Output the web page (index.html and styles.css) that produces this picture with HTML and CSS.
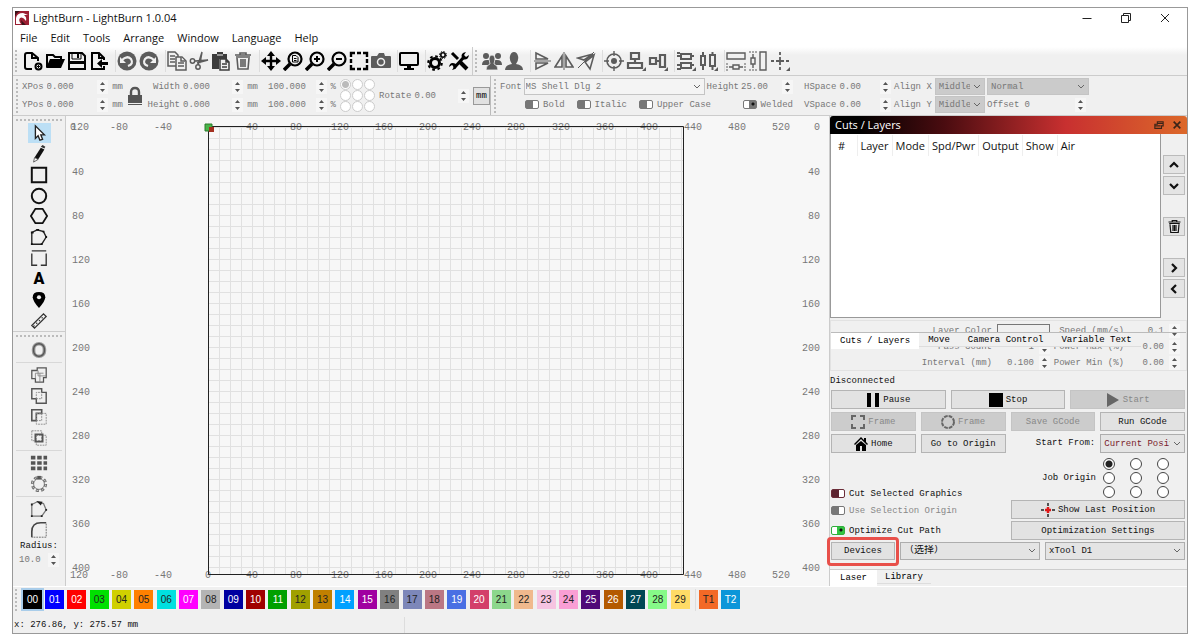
FILE: index.html
```html
<!DOCTYPE html>
<html lang="en">
<head>
<meta charset="utf-8">
<title>LightBurn - LightBurn 1.0.04</title>
<link rel="stylesheet" href="styles.css">
</head>
<body>
<svg class="defs" aria-hidden="true">
  <symbol id="new" viewBox="0 0 20 20"><path d="M9 18H4Q2 18 2 16V4Q2 2 4 2H9L15 7V10M9 2V7H15" fill="none" stroke="currentColor" stroke-width="2"/><circle cx="15.500" cy="15.500" r="3" fill="none" stroke="currentColor" stroke-width="2"/><path d="M15.500 14V17M14 15.500H17" stroke="currentColor"/></symbol>
  <symbol id="open" viewBox="0 0 20 20"><path d="M2 16V4H8L10 6H16V8" fill="none" stroke="currentColor" stroke-width="2"/><path d="M1 17L5 8H20L16 17Z" fill="currentColor"/></symbol>
  <symbol id="save" viewBox="0 0 20 20"><path d="M2 2H15L18 5V18H2Z" fill="none" stroke="currentColor" stroke-width="2"/><path d="M5 2H14V8H5Z" fill="none" stroke="currentColor"/><path d="M10 3H12V7H10ZM2 10H18V13H2Z" fill="currentColor"/></symbol>
  <symbol id="import" viewBox="0 0 20 20"><path d="M15 15V18H3V2H10L15 7V9M10 2V7H15" fill="none" stroke="currentColor" stroke-width="2"/><path d="M8 12.500L13 8V11H19V14H13V17Z" fill="currentColor"/></symbol>
  <symbol id="undo" viewBox="0 0 20 20"><circle cx="10" cy="10" r="9.500" fill="currentColor"/><path d="M5 9Q10 4 14 8Q17 13 11 15" fill="none" stroke="#f0f0f0" stroke-width="2.200"/><path d="M3 6V12H9Z" fill="#f0f0f0"/></symbol>
  <symbol id="redo" viewBox="0 0 20 20"><g transform="matrix(-1 0 0 1 20 0)"><circle cx="10" cy="10" r="9.500" fill="currentColor"/><path d="M5 9Q10 4 14 8Q17 13 11 15" fill="none" stroke="#f0f0f0" stroke-width="2.200"/><path d="M3 6V12H9Z" fill="#f0f0f0"/></g></symbol>
  <symbol id="copy" viewBox="0 0 20 20"><g fill="#f0f0f0" stroke="currentColor" stroke-width="1.500"><path d="M1 1H8L11 4V15H1Z"/><path d="M3 5H8M3 8H8M3 11H8"/><path d="M9 6H15L19 10V19H9Z"/><path d="M14 6V10H18M11 12H17M11 15H17" /></g></symbol>
  <symbol id="cut" viewBox="0 0 20 20"><g fill="none" stroke="currentColor" stroke-width="1.500"><circle cx="3.500" cy="10" r="2.200"/><circle cx="9" cy="16" r="2.200"/><path d="M6 10L19 9L8 12M9 14L13 1L11 12" stroke-width="1.500"/></g></symbol>
  <symbol id="paste" viewBox="0 0 20 20"><path d="M1 3H6V1H12V3H16V8H8V18H1Z" fill="currentColor"/><path d="M6 4H12" stroke="#f0f0f0"/><path d="M9 8H15L18 11V19H9ZM15 8V11H18M11 13H16M11 16H16" fill="#f0f0f0" stroke="currentColor" stroke-width="1.500"/></symbol>
  <symbol id="trash" viewBox="0 0 20 20"><path d="M3 6H17M4 7L5 18H15L16 7M2 4H18M7 4V2H13V4M8 8V16M10 8V16M12 8V16" fill="none" stroke="currentColor" stroke-width="1.600"/></symbol>
  <symbol id="move" viewBox="0 0 20 20"><path d="M10 3V17M3 10H17" stroke="currentColor" stroke-width="2.400"/><path d="M10 0L14 5H6ZM10 20L14 15H6ZM0 10L5 6V14ZM20 10L15 6V14Z" fill="currentColor"/></symbol>
  <symbol id="lens" viewBox="0 0 20 20"><circle cx="12" cy="8" r="6.500" fill="none" stroke="currentColor" stroke-width="2.200"/><path d="M7 13L1 19" stroke="currentColor" stroke-width="3.500"/></symbol>
  <symbol id="marquee" viewBox="0 0 20 20"><path d="M2 6V2H6M8 2H12M14 2H18V6M18 8V12M18 14V18H14M12 18H8M6 18H2V14M2 12V8" fill="none" stroke="currentColor" stroke-width="2.400"/></symbol>
  <symbol id="camera" viewBox="0 0 20 20"><path d="M0 6Q0 5 1 5H6L8 2H13L14 5H19Q20 5 20 6V16Q20 17 19 17H1Q0 17 0 16Z" fill="currentColor"/><circle cx="10" cy="11" r="3.500" fill="none" stroke="#f0f0f0" stroke-width="1.500"/></symbol>
  <symbol id="monitor" viewBox="0 0 20 20"><rect x="1" y="2" width="18" height="12" rx="1" fill="none" stroke="currentColor" stroke-width="2"/><path d="M8 14H12V17H15V19H5V17H8Z" fill="currentColor"/></symbol>
  <symbol id="gears" viewBox="0 0 20 20"><circle cx="8" cy="12" r="4.500" fill="none" stroke="currentColor" stroke-width="3"/><circle cx="8" cy="12" r="6.800" fill="none" stroke="currentColor" stroke-width="2" stroke-dasharray="2.700 2.640"/><circle cx="16" cy="4" r="2.200" fill="none" stroke="currentColor" stroke-width="1.600"/><circle cx="16" cy="4" r="3.500" fill="none" stroke="currentColor" stroke-width="1" stroke-dasharray="1.400 1.350"/></symbol>
  <symbol id="tools" viewBox="0 0 20 20"><path d="M3 2L9 8M5 17L15 6" stroke="currentColor" stroke-width="3"/><path d="M11 11L18 18" stroke="currentColor" stroke-width="4"/><path d="M13 7Q11 2 17 1L15 4L17 6L20 4Q19 10 13 8ZM7 13Q9 18 3 19L5 16L3 14L0 16Q1 10 7 13Z" fill="currentColor"/></symbol>
  <symbol id="users" viewBox="0 0 20 20"><g fill="currentColor"><circle cx="4" cy="5" r="3"/><circle cx="16" cy="5" r="3"/><path d="M0 14Q0 9 5 9H15Q20 9 20 14Z"/><g stroke="#f0f0f0" stroke-width=".8"><path d="M4 19Q4 14 8 13L7 8Q7 4 10 4T13 8L12 13Q16 14 16 19Z"/></g></g></symbol>
  <symbol id="user" viewBox="0 0 20 20"><path d="M1 19Q1 14 8 13Q5 9 6 5Q7 1 10 1T14 5Q15 9 12 13Q19 14 19 19Z" fill="currentColor"/></symbol>
  <symbol id="flip" viewBox="0 0 20 20"><path d="M4 2L16 8H4ZM4 12H16L4 18Z" fill="none" stroke="currentColor" stroke-width="1.600"/><path d="M2 10H19" stroke="currentColor"/></symbol>
  <symbol id="mirror" viewBox="0 0 20 20"><path d="M8 5V16H1ZM12 5V16H19Z" fill="none" stroke="currentColor" stroke-width="1.600"/><path d="M10 1V19" stroke="currentColor"/></symbol>
  <symbol id="diag" viewBox="0 0 20 20"><path d="M2 7L17 3L8 9ZM9 11L18 4L14 18Z" fill="none" stroke="currentColor" stroke-width="1.600"/><path d="M2 17L18 1" stroke="currentColor"/></symbol>
  <symbol id="target" viewBox="0 0 20 20"><circle cx="10" cy="10" r="7" fill="none" stroke="currentColor" stroke-width="1.600"/><circle cx="10" cy="10" r="3" fill="currentColor"/><path d="M10 0V5M10 15V20M0 10H5M15 10H20" stroke="currentColor" stroke-width="1.400"/></symbol>
  <symbol id="alignv" viewBox="0 0 20 20"><path d="M5 2H13V8H5ZM2 12H16V17H2ZM9 8V12" fill="none" stroke="currentColor" stroke-width="2.200"/><path d="M20 16V20H16Z" fill="currentColor"/></symbol>
  <symbol id="alignh" viewBox="0 0 20 20"><path d="M2 7H8V13H2ZM12 4H17V16H12ZM8 10H12" fill="none" stroke="currentColor" stroke-width="2.200"/><path d="M20 16V20H16Z" fill="currentColor"/></symbol>
  <symbol id="distv" viewBox="0 0 20 20"><path d="M5 3H15V8H5ZM5 12H15V17H5ZM1 2H4M1 5H5M15 5H18M1 14H5M15 14H18M1 18H5" fill="none" stroke="currentColor" stroke-width="2"/><path d="M20 16V20H16Z" fill="currentColor"/></symbol>
  <symbol id="disth" viewBox="0 0 20 20"><path d="M3 5H7V14H3ZM12 4H17V15H12ZM5 1V5M5 14V19M14.500 1V4M14.500 15V19" fill="none" stroke="currentColor" stroke-width="2"/><path d="M20 16V20H16Z" fill="currentColor"/></symbol>
  <symbol id="samew" viewBox="0 0 20 20"><path d="M1 2H19V8H1ZM7 14H13V18H7ZM3 16H7M13 16H17" fill="none" stroke="currentColor" stroke-width="1.400"/><path d="M1 12V20M19 12V20" stroke="currentColor" stroke-dasharray="2 1"/></symbol>
  <symbol id="sameh" viewBox="0 0 20 20"><path d="M12 1H18V19H12ZM3 7H7V13H3ZM5 3V7M5 13V17" fill="none" stroke="currentColor" stroke-width="1.400"/><path d="M1 1H9M1 19H9" stroke="currentColor" stroke-dasharray="2 1"/></symbol>
  <symbol id="cross" viewBox="0 0 20 20"><path d="M10 1V4M10 6V14M10 16V19M1 10H4M6 10H14M16 10H19" stroke="currentColor" stroke-width="1.800"/><path d="M20 16V20H16Z" fill="currentColor"/></symbol>
  <symbol id="spin" viewBox="0 0 11 14"><path d="M3 5L5.500 2L8 5ZM3 9L5.500 12L8 9Z" fill="currentColor"/></symbol>
  <symbol id="up" viewBox="0 0 12 12"><path d="M2 8L6 4L10 8" fill="none" stroke="currentColor" stroke-width="2.200"/></symbol>
</svg>

<div class="window">
  <header class="titlebar">
    <svg class="logo" viewBox="0 0 14 14"><path d="M0 0H14V14H0Z" fill="#9c1f33"/><path d="M1 13V7Q2 2 8 2L13 4L9 4Q12 6 11 10Q8 5 5 7Q3 9 6 13Z" fill="#fff"/><path d="M0 0H5Q1 2 0 6ZM6 9L11 14H7Z" fill="#3a1218"/></svg>
    <h1 class="title">LightBurn - LightBurn 1.0.04</h1>
    <div class="window-buttons">
      <button aria-label="Minimize"><svg viewBox="0 0 12 12"><path d="M1.500 6.500H10.500" stroke="#222"/></svg></button>
      <button aria-label="Restore"><svg viewBox="0 0 12 12"><path d="M1.500 3.500H8.500V10.500H1.500ZM3.500 3.500V1.500H10.500V8.500H8.500" fill="none" stroke="#222"/></svg></button>
      <button aria-label="Close"><svg viewBox="0 0 12 12"><path d="M2 2L10 10M10 2L2 10" stroke="#222"/></svg></button>
    </div>
  </header>
  <nav class="menubar">
    <button>File</button><button>Edit</button><button>Tools</button><button>Arrange</button><button>Window</button><button>Language</button><button>Help</button>
  </nav>

  <div class="toolbars">
    <div class="toolbar toolbar-main">
      <i class="handle"></i>
      <button aria-label="New"><svg><use href="#new"/></svg></button>
      <button aria-label="Open"><svg><use href="#open"/></svg></button>
      <button aria-label="Save"><svg><use href="#save"/></svg></button>
      <button aria-label="Import"><svg><use href="#import"/></svg></button>
      <i class="sep"></i>
      <button class="dim" aria-label="Undo"><svg><use href="#undo"/></svg></button>
      <button class="dim" aria-label="Redo"><svg><use href="#redo"/></svg></button>
      <i class="sep"></i>
      <button class="dim" aria-label="Copy"><svg><use href="#copy"/></svg></button>
      <button class="dim" aria-label="Cut"><svg><use href="#cut"/></svg></button>
      <button class="dark" aria-label="Paste"><svg><use href="#paste"/></svg></button>
      <button class="dim" aria-label="Delete"><svg><use href="#trash"/></svg></button>
      <i class="sep"></i>
      <button aria-label="Pan"><svg><use href="#move"/></svg></button>
      <button aria-label="Zoom to page"><svg viewBox="0 0 20 20"><use href="#lens"/><path d="M9.500 4.500H13L15 6.500V11H9.500ZM11 7.500H13.500M11 9.500H13.500" fill="none" stroke="#000"/></svg></button>
      <button aria-label="Zoom in"><svg viewBox="0 0 20 20"><use href="#lens"/><path d="M12 5V11M9 8H15" stroke="#000" stroke-width="2"/></svg></button>
      <button aria-label="Zoom out"><svg viewBox="0 0 20 20"><use href="#lens"/><path d="M9 8H15" stroke="#000" stroke-width="2"/></svg></button>
      <button aria-label="Frame selection"><svg><use href="#marquee"/></svg></button>
      <button class="dim" aria-label="Camera"><svg><use href="#camera"/></svg></button>
      <i class="sep"></i>
      <button aria-label="Preview"><svg><use href="#monitor"/></svg></button>
      <i class="sep"></i>
      <button aria-label="Settings"><svg><use href="#gears"/></svg></button>
      <button aria-label="Device settings"><svg><use href="#tools"/></svg></button>
    </div>
    <div class="toolbar toolbar-arrange">
      <i class="handle"></i>
      <button class="dim" aria-label="Group"><svg><use href="#users"/></svg></button>
      <button class="dim" aria-label="Ungroup"><svg><use href="#user"/></svg></button>
      <i class="sep"></i>
      <button class="dim" aria-label="Flip vertical"><svg><use href="#flip"/></svg></button>
      <button class="dim" aria-label="Flip horizontal"><svg><use href="#mirror"/></svg></button>
      <button class="dim" aria-label="Mirror across line"><svg><use href="#diag"/></svg></button>
      <i class="sep"></i>
      <button class="dim" aria-label="Align centers"><svg><use href="#target"/></svg></button>
      <button class="dim" aria-label="Align vertical"><svg><use href="#alignv"/></svg></button>
      <button class="dim" aria-label="Align horizontal"><svg><use href="#alignh"/></svg></button>
      <i class="sep"></i>
      <button class="dim" aria-label="Distribute vertical"><svg><use href="#distv"/></svg></button>
      <button class="dim" aria-label="Distribute horizontal"><svg><use href="#disth"/></svg></button>
      <i class="sep"></i>
      <button class="dim" aria-label="Same width"><svg><use href="#samew"/></svg></button>
      <button class="dim" aria-label="Same height"><svg><use href="#sameh"/></svg></button>
      <button class="dim" aria-label="Move to position"><svg><use href="#cross"/></svg></button>
    </div>
  </div>

  <div class="propbar">
    <div class="props props-shape">
      <i class="handle"></i>
      <div class="stack pos">
        <div class="row"><label for="xpos">XPos</label><input id="xpos" value="0.000"><svg class="spin"><use href="#spin"/></svg><span>mm</span></div>
        <div class="row"><label for="ypos">YPos</label><input id="ypos" value="0.000"><svg class="spin"><use href="#spin"/></svg><span>mm</span></div>
      </div>
      <button class="lock" aria-label="Lock aspect"><svg viewBox="0 0 16 20"><path d="M4 10V6Q4 2 8 2T12 6V10" fill="none" stroke="#555" stroke-width="2.400"/><path d="M1 9H15V17H1ZM1 18H15V19H1Z" fill="#555"/></svg></button>
      <div class="stack size">
        <div class="row"><label for="w">Width</label><input id="w" value="0.000"><svg class="spin"><use href="#spin"/></svg><span>mm</span></div>
        <div class="row"><label for="h">Height</label><input id="h" value="0.000"><svg class="spin"><use href="#spin"/></svg><span>mm</span></div>
      </div>
      <div class="stack scale">
        <div class="row"><input aria-label="Width percent" value="100.000"><svg class="spin"><use href="#spin"/></svg><span>%</span></div>
        <div class="row"><input aria-label="Height percent" value="100.000"><svg class="spin"><use href="#spin"/></svg><span>%</span></div>
      </div>
      <div class="anchor">
        <input type="radio" name="anchor" aria-label="Top left" checked><input type="radio" name="anchor" aria-label="Top"><input type="radio" name="anchor" aria-label="Top right">
        <input type="radio" name="anchor" aria-label="Left"><input type="radio" name="anchor" aria-label="Center"><input type="radio" name="anchor" aria-label="Right">
        <input type="radio" name="anchor" aria-label="Bottom left"><input type="radio" name="anchor" aria-label="Bottom"><input type="radio" name="anchor" aria-label="Bottom right">
      </div>
      <div class="row rotate"><label for="rot">Rotate</label><input id="rot" value="0.00"><svg class="spin"><use href="#spin"/></svg></div>
      <button class="unit">mm</button>
    </div>
    <div class="props props-text">
      <i class="handle"></i>
      <div class="stack font">
        <div class="row"><label for="font">Font</label><select id="font" class="wide light"><option>MS Shell Dlg 2</option></select><label for="fh">Height</label><input id="fh" value="25.00"><svg class="spin"><use href="#spin"/></svg></div>
        <div class="row toggles">
          <label><input type="checkbox" class="toggle">Bold</label><label><input type="checkbox" class="toggle">Italic</label><label><input type="checkbox" class="toggle">Upper Case</label><label class="welded"><input type="checkbox" class="toggle" checked>Welded</label>
        </div>
      </div>
      <div class="stack space">
        <div class="row"><label for="hs">HSpace</label><input id="hs" value="0.00"><svg class="spin"><use href="#spin"/></svg></div>
        <div class="row"><label for="vs">VSpace</label><input id="vs" value="0.00"><svg class="spin"><use href="#spin"/></svg></div>
      </div>
      <div class="stack align">
        <div class="row"><label for="ax">Align X</label><select id="ax"><option>Middle</option></select></div>
        <div class="row"><label for="ay">Align Y</label><select id="ay"><option>Middle</option></select></div>
      </div>
      <div class="stack offset">
        <div class="row"><select aria-label="Text mode"><option>Normal</option></select></div>
        <div class="row"><label for="off">Offset</label><input id="off" value="0"><svg class="spin"><use href="#spin"/></svg></div>
      </div>
    </div>
  </div>

  <main class="main">
    <aside class="tools">
      <div class="tool-group draw">
        <i class="handle-h"></i>
        <button class="active" aria-label="Select"><svg viewBox="0 0 20 20"><path d="M6 2V16L9 13L11 18L14 17L12 12H16Z" fill="#fff" stroke="#222" stroke-width="1.500"/></svg></button>
        <button aria-label="Draw lines"><svg viewBox="0 0 20 20"><path d="M12 3L16 5L9 16L5 14Z" fill="#111"/><path d="M12 2L14 0L17 2L16 4Z" fill="#333"/><path d="M5 14L9 16L4 19Z" fill="#fff" stroke="#555"/></svg></button>
        <button aria-label="Rectangle"><svg viewBox="0 0 20 20"><path d="M2 2H18V18H2Z" fill="none" stroke="#111" stroke-width="2.200"/></svg></button>
        <button aria-label="Ellipse"><svg viewBox="0 0 20 20"><circle cx="10" cy="10" r="8" fill="none" stroke="#111" stroke-width="2.200"/></svg></button>
        <button aria-label="Polygon"><svg viewBox="0 0 20 20"><path d="M1 10L6 2H14L19 10L14 18H6Z" fill="none" stroke="#111" stroke-width="2"/></svg></button>
        <button aria-label="Edit nodes"><svg viewBox="0 0 20 20"><path d="M2 5L8 2L15 4L18 10L13 18H2Z" fill="none" stroke="#222" stroke-width="1.500"/><path d="M1 4H4V6H1ZM7 1H10V3H7ZM14 3H16V5H14ZM17 9H19V11H17ZM12 17H14V19H12ZM1 17H3V19H1Z" fill="#111"/></svg></button>
        <button aria-label="Tabs"><svg viewBox="0 0 20 20"><path d="M2 2H18M2 5V18H8M12 18H18V5" fill="none" stroke="#333" stroke-width="1.500"/></svg></button>
        <button class="letter" aria-label="Text">A</button>
        <button aria-label="Position laser"><svg viewBox="0 0 20 20"><path d="M10 19Q3 11 3 7Q3 1 10 1T17 7Q17 11 10 19Z" fill="#000"/><circle cx="10" cy="7" r="2.300" fill="#f0f0f0"/></svg></button>
        <button aria-label="Measure"><svg viewBox="0 0 20 20"><path d="M2 15L15 2L18 5L5 18ZM4 15L5 16M7 12L8 13M10 9L11 10M13 6L14 7" fill="none" stroke="#333" stroke-width="1.400"/></svg></button>
      </div>
      <div class="tool-group modify">
        <i class="handle-h"></i>
        <button aria-label="Offset shapes"><svg viewBox="0 0 20 20"><rect x="4" y="3" width="12" height="14" rx="6" fill="none" stroke="#999" stroke-width="4"/><rect x="4" y="3" width="12" height="14" rx="6" fill="none" stroke="#555" stroke-width="1.500"/></svg></button>
        <i class="line"></i>
        <button aria-label="Weld"><svg viewBox="0 0 20 20"><path d="M2 5H8V2H18V13H15V18H6V14H2Z" fill="none" stroke="#555" stroke-width="1.400"/><path d="M6 14V8H15M9 5V11H18M11 8V18" fill="none" stroke="#888"/></svg></button>
        <button aria-label="Boolean union"><svg viewBox="0 0 20 20"><path d="M2 2H13V6H18V18H7V13H2Z" fill="none" stroke="#555" stroke-width="1.600"/><path d="M7 13V6H13V13Z" fill="none" stroke="#888" stroke-dasharray="2 1"/></svg></button>
        <button aria-label="Boolean subtract"><svg viewBox="0 0 20 20"><path d="M2 2H13V6H7V14H2Z" fill="none" stroke="#555" stroke-width="1.800"/><path d="M7 6H18V18H7ZM13 6V14H7" fill="none" stroke="#888" stroke-dasharray="2 1"/></svg></button>
        <button aria-label="Boolean intersection"><svg viewBox="0 0 20 20"><path d="M2 2H13V13H2ZM7 7H18V18H7Z" fill="none" stroke="#888" stroke-dasharray="2 1"/><path d="M6 6H14V14H6Z" fill="none" stroke="#555" stroke-width="2"/></svg></button>
        <i class="line"></i>
        <button aria-label="Grid array"><svg viewBox="0 0 20 20"><path d="M1 2H6V6H1ZM8 2H13V6H8ZM15 2H19V6H15ZM1 8H6V12H1ZM8 8H13V12H8ZM15 8H19V12H15ZM1 14H6V18H1ZM8 14H13V18H8ZM15 14H19V18H15Z" fill="#555"/></svg></button>
        <button aria-label="Circular array"><svg viewBox="0 0 20 20"><circle cx="10" cy="10" r="6" fill="none" stroke="#777"/><circle cx="10" cy="10" r="7.500" fill="none" stroke="#666" stroke-width="3" stroke-dasharray="3.400 2.490"/><circle cx="10" cy="10" r="7.500" fill="none" stroke="#f0f0f0" stroke-dasharray="2 3.890" stroke-dashoffset="-.7"/><path d="M8 1H12V5H8Z" fill="#555"/></svg></button>
        <i class="line"></i>
        <button aria-label="Start point"><svg viewBox="0 0 20 20"><path d="M2 5L8 2L15 4L18 11L13 18H2Z" fill="none" stroke="#777" stroke-width="1.400"/><path d="M7 1L14 2L12 6ZM1 4H3V6H1ZM17 10H19V12H17ZM12 17H14V19H12ZM1 17H3V19H1Z" fill="#222"/></svg></button>
        <button aria-label="Round corners"><svg viewBox="0 0 20 20"><path d="M2 18V12Q2 2 12 2H18" fill="none" stroke="#444" stroke-width="1.800"/><path d="M18 3V18H2" fill="none" stroke="#666" stroke-dasharray="2 1"/></svg></button>
        <label for="radius">Radius:</label>
        <div class="row radius"><input id="radius" value="10.0"><svg class="spin"><use href="#spin"/></svg></div>
      </div>
    </aside>

    <section class="canvas" aria-label="Workspace">
      <svg viewBox="66 116 763 470">
        <defs><pattern id="grid" x="208" y="127" width="11" height="11" patternUnits="userSpaceOnUse"><path d="M.5 0V11M0 .5H11" stroke="#e1e1e1" fill="none"/></pattern></defs>
        <rect x="208" y="127" width="476" height="448" fill="url(#grid)"/>
        <g class="axis">
          <text x="71" y="130">120</text><text x="70" y="130">0</text>
          <g class="mid">
            <text x="119" y="130">-80</text><text x="163" y="130">-40</text><text x="252" y="130">40</text><text x="296" y="130">80</text><text x="340" y="130">120</text><text x="384" y="130">160</text><text x="428" y="130">200</text><text x="472" y="130">240</text><text x="516" y="130">280</text><text x="561" y="130">320</text><text x="605" y="130">360</text><text x="649" y="130">400</text><text x="693" y="130">440</text><text x="737" y="130">480</text><text x="781" y="130">520</text>
            <text x="79" y="578">120</text><text x="119" y="578">-80</text><text x="163" y="578">-40</text><text x="208" y="578">0</text><text x="252" y="578">40</text><text x="296" y="578">80</text><text x="340" y="578">120</text><text x="384" y="578">160</text><text x="428" y="578">200</text><text x="472" y="578">240</text><text x="516" y="578">280</text><text x="561" y="578">320</text><text x="605" y="578">360</text><text x="649" y="578">400</text><text x="693" y="578">440</text><text x="737" y="578">480</text><text x="781" y="578">520</text>
          </g>
          <text x="72" y="175">40</text><text x="72" y="219">80</text><text x="72" y="263">120</text><text x="72" y="307">160</text><text x="72" y="351">200</text><text x="72" y="395">240</text><text x="72" y="439">280</text><text x="72" y="483">320</text><text x="72" y="527">360</text><text x="72" y="571">400</text>
          <g class="end">
            <text x="820" y="130">0</text><text x="820" y="175">40</text><text x="820" y="219">80</text><text x="820" y="263">120</text><text x="820" y="307">160</text><text x="820" y="351">200</text><text x="820" y="395">240</text><text x="820" y="439">280</text><text x="820" y="483">320</text><text x="820" y="527">360</text><text x="820" y="571">400</text>
          </g>
        </g>
        <path d="M208.500 126.500H683.500V574.500H208.500Z" fill="none" stroke="#222"/>
        <path d="M205 124H212V131H205Z" fill="#49b549" stroke="#2c7a2c"/><path d="M209 127H214V132H209Z" fill="#a33020"/>
      </svg>
    </section>

    <aside class="dock">
      <div class="dock-title"><h2>Cuts / Layers</h2>
        <button aria-label="Float"><svg viewBox="0 0 12 12"><path d="M4 2H11V7H9V10H1V5H4ZM4 4H11M1 7H8" fill="none" stroke="#3a2418" stroke-width="1.300"/></svg></button>
        <button aria-label="Close panel"><svg viewBox="0 0 12 12"><path d="M2 2L10 10M10 2L2 10" stroke="#3a2418" stroke-width="2"/></svg></button>
      </div>
      <div class="layers">
        <div class="list"><table><thead><tr><th class="c1">#</th><th>Layer</th><th>Mode</th><th>Spd/Pwr</th><th>Output</th><th>Show</th><th>Air</th></tr></thead></table></div>
        <div class="side">
          <button aria-label="Move up"><svg><use href="#up"/></svg></button>
          <button aria-label="Move down"><svg class="down"><use href="#up"/></svg></button>
          <button class="apart" aria-label="Delete layer"><svg class="big"><use href="#trash"/></svg></button>
          <button class="apart" aria-label="Next"><svg class="right"><use href="#up"/></svg></button>
          <button aria-label="Previous"><svg class="left"><use href="#up"/></svg></button>
        </div>
      </div>
      <div class="cut-settings">
        <div class="cut-grid">
          <label>Layer Color</label><span class="color-box"></span><label for="spd">Speed (mm/s)</label><input id="spd" value="0.1"><svg class="spin"><use href="#spin"/></svg>
          <label for="pass">Pass Count</label><input id="pass" value="1"><svg class="spin"><use href="#spin"/></svg><label for="pmax">Power Max (%)</label><input id="pmax" value="0.00"><svg class="spin"><use href="#spin"/></svg>
          <label for="int">Interval (mm)</label><input id="int" value="0.100"><svg class="spin"><use href="#spin"/></svg><label for="pmin">Power Min (%)</label><input id="pmin" value="0.00"><svg class="spin"><use href="#spin"/></svg>
        </div>
        <div class="tabs tabs-over"><button class="on">Cuts / Layers</button><button>Move</button><button>Camera Control</button><button>Variable Text</button></div>
      </div>
      <div class="laser">
        <p class="status">Disconnected</p>
        <div class="buttons">
          <button><svg viewBox="0 0 14 14"><path d="M1 0H5V14H1ZM9 0H13V14H9Z"/></svg>Pause</button>
          <button><svg viewBox="0 0 14 14"><path d="M0 0H14V14H0Z"/></svg>Stop</button>
          <button disabled><svg viewBox="0 0 14 14"><path d="M1 0L13 7L1 14Z" fill="#666"/></svg>Start</button>
        </div>
        <div class="buttons">
          <button disabled><svg viewBox="0 0 14 14"><path d="M1 5V1H5M9 1H13V5M13 9V13H9M5 13H1V9" fill="none" stroke="#666" stroke-width="2"/></svg>Frame</button>
          <button disabled><svg viewBox="0 0 14 14"><circle cx="7" cy="7" r="6" fill="none" stroke="#666" stroke-width="2" stroke-dasharray="3.700 1"/></svg>Frame</button>
          <button disabled>Save GCode</button>
          <button>Run GCode</button>
        </div>
        <div class="buttons">
          <button><svg viewBox="0 0 14 14"><path d="M0 7L7 0L10 3V1H12V5L14 7L13 8L7 2L1 8ZM2 8L7 4L12 8V14H8V9H6V14H2Z"/></svg>Home</button>
          <button>Go to Origin</button>
          <label for="from">Start From:</label>
          <select id="from" class="red"><option>Current Position</option></select>
        </div>
        <div class="options">
          <div class="checks">
            <label><input type="checkbox" class="toggle maroon">Cut Selected Graphics</label>
            <label class="off"><input type="checkbox" class="toggle" disabled>Use Selection Origin</label>
            <label class="tall"><input type="checkbox" class="toggle green" checked>Optimize Cut Path</label>
          </div>
          <div class="origin">
            <div class="job"><span>Job Origin</span>
              <div class="radios">
                <input type="radio" name="job" aria-label="Top left" checked><input type="radio" name="job" aria-label="Top"><input type="radio" name="job" aria-label="Top right">
                <input type="radio" name="job" aria-label="Left"><input type="radio" name="job" aria-label="Center"><input type="radio" name="job" aria-label="Right">
                <input type="radio" name="job" aria-label="Bottom left"><input type="radio" name="job" aria-label="Bottom"><input type="radio" name="job" aria-label="Bottom right">
              </div>
            </div>
            <div class="buttons"><button><svg viewBox="0 0 14 14"><path d="M7 0V3M7 11V14M0 7H3M11 7H14" stroke="#222" stroke-width="1.500"/><path d="M7 4V10M4 7H10" stroke="#e01818" stroke-width="2.500"/></svg>Show Last Position</button></div>
            <div class="buttons"><button>Optimization Settings</button></div>
          </div>
        </div>
        <div class="devices">
          <div class="callout"><button>Devices</button></div>
          <select aria-label="Port" class="cjk"><option>（选择）</option></select>
          <select aria-label="Device"><option>xTool D1</option></select>
        </div>
        <div class="tabs tabs-bottom"><button class="on">Laser</button><button>Library</button></div>
      </div>
    </aside>
  </main>

  <div class="palette">
    <i class="handle"></i>
    <button class="swatch k00 dk sel">00</button>
    <div class="swatches">
      <button class="swatch k01 dk">01</button><button class="swatch k02 dk">02</button><button class="swatch k03">03</button><button class="swatch k04">04</button><button class="swatch k05">05</button><button class="swatch k06">06</button><button class="swatch k07 dk">07</button><button class="swatch k08">08</button><button class="swatch k09 dk">09</button><button class="swatch k10 dk">10</button><button class="swatch k11 dk">11</button><button class="swatch k12">12</button><button class="swatch k13">13</button><button class="swatch k14 dk">14</button><button class="swatch k15 dk">15</button><button class="swatch k16">16</button><button class="swatch k17">17</button><button class="swatch k18">18</button><button class="swatch k19 dk">19</button><button class="swatch k20 dk">20</button><button class="swatch k21">21</button><button class="swatch k22">22</button><button class="swatch k23">23</button><button class="swatch k24">24</button><button class="swatch k25 dk">25</button><button class="swatch k26 dk">26</button><button class="swatch k27 dk">27</button><button class="swatch k28">28</button><button class="swatch k29">29</button>
    </div>
    <i class="sep"></i>
    <button class="swatch t1">T1</button><button class="swatch t2 dk">T2</button>
  </div>
  <footer class="statusbar"><span>x: 276.86, y: 275.57 mm</span></footer>
</div>
</body>
</html>
```
FILE: styles.css
```css
* { box-sizing: border-box; }
body { margin: 0; padding: 7px 14px 5px 12px; height: 100vh; display: flex; background: #fff; font: 9px/12px "Liberation Mono", "Noto Sans CJK SC", monospace; color: #111; }
button, input, select { font: inherit; color: inherit; margin: 0; padding: 0; border: 0; background: none; border-radius: 0; }
button { display: flex; align-items: center; justify-content: center; white-space: nowrap; }
h1, h2, p { margin: 0; font-weight: normal; }
label, span { white-space: nowrap; }
.defs { position: absolute; width: 0; height: 0; }
.window { flex: 1; min-width: 0; display: flex; flex-direction: column; border: 1px solid #999; background: #f0f0f0; }

/* title and menus */
.titlebar { height: 20px; display: flex; align-items: center; background: #fff; padding-left: 2px; }
.logo { width: 14px; height: 14px; margin-right: 4px; }
.title, .menubar, .dock-title h2, .list { font: 11px/16px "Open Sans", "Noto Sans", sans-serif; }
.title { flex: 1; }
.window-buttons { display: flex; padding-right: 3px; }
.window-buttons button { width: 39px; }
.window-buttons svg { width: 12px; height: 12px; }
.menubar { height: 19px; display: flex; align-items: center; gap: 13px; padding-left: 7px; background: #fff; }

/* icon toolbars */
.toolbars { height: 29px; display: flex; border-bottom: 1px solid #ccc; background: linear-gradient(#fff, #f0f0f0 8px); }
.toolbar { display: flex; align-items: center; padding-left: 2px; }
.toolbar button { width: 22px; height: 24px; color: #000; }
.toolbar svg { width: 20px; height: 20px; }
.toolbar .dim { color: #5c5c5c; }
.toolbar .dark { color: #3c3c3c; }
.toolbar-main { padding-right: 2px; border-right: 1px solid #ccc; }
.handle { width: 4px; height: 22px; margin-right: 2px; border-left: 2px dotted #bbb; }
.sep { width: 6px; height: 22px; border-right: 1px solid #ddd; }
.toolbar-main .handle { margin-right: 3px; }

/* property bars */
.propbar { height: 40px; display: flex; border-bottom: 1px solid #ccc; color: #777; }
.props { display: flex; align-items: center; padding-left: 3px; }
.propbar .handle { height: 34px; }
.stack { display: flex; flex-direction: column; gap: 1px; }
.row { display: flex; align-items: center; height: 17px; }
.row label { margin-right: 3px; }
.row input:not(.toggle) { flex: 1; min-width: 0; width: 0; }
.spin { width: 11px; height: 14px; flex: none; color: #555; background: #f6f6f6; }
.row > span { margin-left: 4px; }
.props-shape { width: 478px; border-right: 1px solid #bbb; }
.pos { width: 101px; }
.lock { width: 16px; margin: 0 4px; }
.lock svg { width: 16px; height: 20px; }
.size { width: 111px; }
.size label { width: 33px; text-align: right; }
.scale { width: 68px; margin-left: 10px; }
.anchor { display: grid; grid-template-columns: repeat(3, 11px); gap: 0 1px; margin: 0 4px; }
.anchor input { appearance: none; width: 11px; height: 11px; border: 1px solid #ccc; border-radius: 50%; background: #fff; }
.anchor input:checked { background: radial-gradient(#bbb 3px, #fff 4px); }
.rotate { width: 90px; }
.unit { width: 17px; height: 18px; margin-left: 4px; border: 1px solid #999; background: #e1e1e1; color: #000; }
.props-text { flex: 1; min-width: 0; }
.font { width: 293px; }
.font label { margin-right: 2px; }
.font .wide { width: 181px; margin-right: 2px; }
.toggles { padding-left: 25px; }
.toggles label { display: flex; align-items: center; margin-right: 12px; }
.toggles .welded { margin: 0 0 0 auto; }
.space { width: 87px; margin-left: 11px; }
.align { width: 91px; margin-left: 3px; }
.align select { flex: 1; min-width: 0; }
.offset { width: 102px; margin-left: 2px; }
.offset select { width: 100%; }
.offset label { margin-right: 5px; }
.offset .spin { margin-right: 3px; }

select { appearance: none; height: 17px; padding: 0 14px 0 3px; border: 1px solid #adadad; background: #e4e4e4 url("data:image/svg+xml,%3Csvg xmlns='http://www.w3.org/2000/svg' viewBox='0 0 8 8'%3E%3Cpath d='M1 2L4 5L7 2' fill='none' stroke='%23666'/%3E%3C/svg%3E") no-repeat right 3px center / 8px 8px; text-overflow: clip; }
.propbar select { border-color: #c4c4c4; background-color: #cbcbcb; }
.propbar select.light { background-color: #f4f4f4; padding-left: 1px; }

.toggle { appearance: none; flex: none; width: 14px; height: 9px; margin-right: 4px; border: 1px solid #777; border-radius: 2px; background: linear-gradient(90deg, #777 60%, #fff 60%); }
.toggle:checked { background: radial-gradient(circle at 9px 3px, #111 1px, transparent 2px), linear-gradient(90deg, #fff 40%, #777 40%); }
.toggle.maroon { border-color: #6b2c38; background: linear-gradient(90deg, #5c2430 60%, #fff 60%); }
.toggle.green { border-color: #2fae3c; background: radial-gradient(circle at 9px 3px, #111 1px, transparent 2px), linear-gradient(90deg, #fff 40%, #32c541 40%); }

/* main area */
.main { flex: 1; min-height: 0; display: flex; }
.tools { width: 53px; border-right: 1px solid #ccc; color: #111; }
.tool-group { display: flex; flex-direction: column; align-items: center; }
.draw { height: 216px; justify-content: space-between; padding: 3px 0 0; border-bottom: 1px solid #ccc; }
.modify { padding-top: 3px; }
.handle-h { width: 46px; height: 3px; border-top: 2px dotted #bbb; }
.tools button { width: 23px; height: 20px; }
.tools svg { width: 18px; height: 18px; }
.tools .active { background: #bcdff5; }
.tools .letter { font: 900 16px/20px "Roboto", sans-serif; color: #000; }
.line { width: 46px; height: 1px; margin: 1px 0 2px; background: #d8d8d8; }
.modify > button { margin-bottom: 1px; }
.modify .handle-h + button { margin-top: 2px; }
.modify label { line-height: 10px; }
.radius { width: 40px; color: #777; }
.tools .spin { width: 11px; height: 14px; }

.canvas { flex: 1; min-width: 0; background: #f7f7f7; }
.canvas svg { display: block; width: 100%; height: 100%; }
.axis { font-size: 10px; fill: #777; }
.mid { text-anchor: middle; }
.end { text-anchor: end; }

/* right dock */
.dock { width: 358px; display: flex; flex-direction: column; border-left: 1px solid #ccc; }
.dock-title { height: 18px; display: flex; align-items: center; padding: 0 1px 0 5px; border-radius: 3px 3px 0 0; color: #fff; background: linear-gradient(90deg, #000 8%, #4a0c10 32%, #c83030 66%, #dc682a); }
.dock-title h2 { flex: 1; }
.dock-title button { width: 18px; }
.dock-title svg { width: 10px; height: 10px; }
.layers { flex: 1; min-height: 0; display: flex; }
.list { flex: 1; border: 1px solid #999; border-top: 0; background: #fff; }
.list table { border-collapse: collapse; margin-top: 1px; }
.list th { height: 21px; padding: 0 3px; font-weight: normal; border-right: 1px solid #eee; text-align: left; }
.list th:last-child { border: 0; }
.list .c1 { width: 26px; padding-left: 7px; }
.side { width: 26px; padding: 21px 2px 0; display: flex; flex-direction: column; gap: 2px; }
.side button { height: 19px; border: 1px solid #bbb; background: #e4e4e4; }
.side .apart { margin-top: 20px; }
.side svg { width: 12px; height: 12px; }
.side .big { width: 15px; height: 15px; }
.side .down { transform: rotate(180deg); }
.side .right { transform: rotate(90deg); }
.side .left { transform: rotate(-90deg); }
.cut-settings { position: relative; height: 51px; margin-top: 2px; border: 1px solid #e2e2e2; color: #777; }
.cut-grid { display: grid; grid-template-columns: 161px 42px 16px 74px 40px 16px; grid-auto-rows: 16px; align-items: center; text-align: right; padding-top: 2px; }
.cut-grid input { width: 100%; text-align: right; }
.cut-grid .spin { justify-self: end; }
.color-box { grid-column: span 2; height: 14px; margin-left: 5px; border: 1px solid #777; }
.tabs { display: flex; align-items: flex-start; color: #000; }
.tabs button { height: 14px; padding: 0 8px; background: #f0f0f0; border-bottom: 1px solid #ddd; }
.tabs .on { height: 16px; background: #fff; border: 0; }
.tabs-over { position: absolute; left: 0; right: 0; top: 11px; border-top: 1px solid #bbb; }
.tabs-over button { padding: 0 9px; }
.status { height: 19px; padding-top: 4px; }
.laser { display: flex; flex-direction: column; }
.buttons { display: grid; grid-auto-flow: column; grid-auto-columns: minmax(0, 1fr); gap: 5px; padding: 0 2px 0 1px; margin-bottom: 3px; }
.buttons > * { height: 19px; }
.buttons button, .callout button { height: 19px; border: 1px solid #b4b4b4; background: #e2e2e2; }
.buttons button:disabled { background: #ccc; border-color: #c4c4c4; color: #888; }
.buttons svg { width: 14px; height: 14px; margin-right: 3px; flex: none; }
.buttons label { line-height: 19px; text-align: right; }
.red { color: #7a1c2c; }
.options { display: flex; }
.checks { width: 181px; display: flex; flex-direction: column; justify-content: flex-end; padding: 0 0 3px 1px; }
.checks label { display: flex; align-items: center; height: 17px; }
.checks .off { color: #888; }
.checks .tall { margin-top: 3px; }
.origin { flex: 1; }
.job { height: 44px; display: flex; align-items: center; justify-content: flex-end; gap: 7px; padding-right: 18px; }
.radios { display: grid; grid-template-columns: 27px 27px 12px; grid-auto-rows: 14px; align-items: center; }
.radios input { appearance: none; width: 12px; height: 12px; border: 1px solid #444; border-radius: 50%; background: #fff; }
.radios input:checked { background: radial-gradient(#222 3px, #fff 4px); }
.origin .buttons { padding-left: 0; margin-bottom: 2px; }
.devices { display: flex; gap: 5px; padding: 0 2px 0 1px; }
.devices select { flex: 1; min-width: 0; height: 18px; }
.callout { position: relative; width: 64px; }
.callout::after { content: ""; position: absolute; inset: -5px -4px -6px -4px; border: 3px solid #e8504a; border-radius: 4px; pointer-events: none; }
.callout button { width: 100%; height: 18px; }
.cjk { font-size: 10px; }
.tabs-bottom { margin-top: 9px; border-top: 1px solid #ccc; }
.tabs-bottom .on { padding: 0 10px; }

/* color palette and status */
.palette { height: 29px; display: flex; align-items: center; padding: 0 0 3px 2px; border-top: 1px solid #fff; font: 10px/12px "Liberation Sans", sans-serif; }
.palette .sep { width: 3px; margin: 0 3px 0 0; }
.swatches { width: 648px; display: grid; grid-template-columns: repeat(29, 1fr); }
.swatch { width: 19px; height: 19px; color: #222; }
.swatch.dk { color: #fff; }
.sel { width: 23px; height: 23px; margin: 0 1px 0 0; border: 2px solid #a9cdea; }
.t1 { margin-right: 3px; }
.k00 { background: #000; } .k01 { background: #00f; } .k02 { background: #f00; } .k03 { background: #00e000; }
.k04 { background: #d0d000; } .k05 { background: #ff8000; } .k06 { background: #00e0e0; } .k07 { background: #f0f; }
.k08 { background: #b4b4b4; } .k09 { background: #0000a0; } .k10 { background: #a00000; } .k11 { background: #00a000; }
.k12 { background: #a0a000; } .k13 { background: #c08000; } .k14 { background: #00a0ff; } .k15 { background: #a000a0; }
.k16 { background: #808080; } .k17 { background: #7d87b9; } .k18 { background: #bb7784; } .k19 { background: #4a6fe3; }
.k20 { background: #d33f6a; } .k21 { background: #8cd78c; } .k22 { background: #f0b98d; } .k23 { background: #f6c4e1; }
.k24 { background: #fa9ed4; } .k25 { background: #500a78; } .k26 { background: #b45a00; } .k27 { background: #004754; }
.k28 { background: #86fa88; } .k29 { background: #ffdb66; } .t1 { background: #f36926; } .t2 { background: #0c96d9; }
.statusbar { height: 18px; display: flex; align-items: flex-end; padding-left: 1px; }
.statusbar span { width: 391px; line-height: 16px; border-right: 1px solid #ddd; }
```
